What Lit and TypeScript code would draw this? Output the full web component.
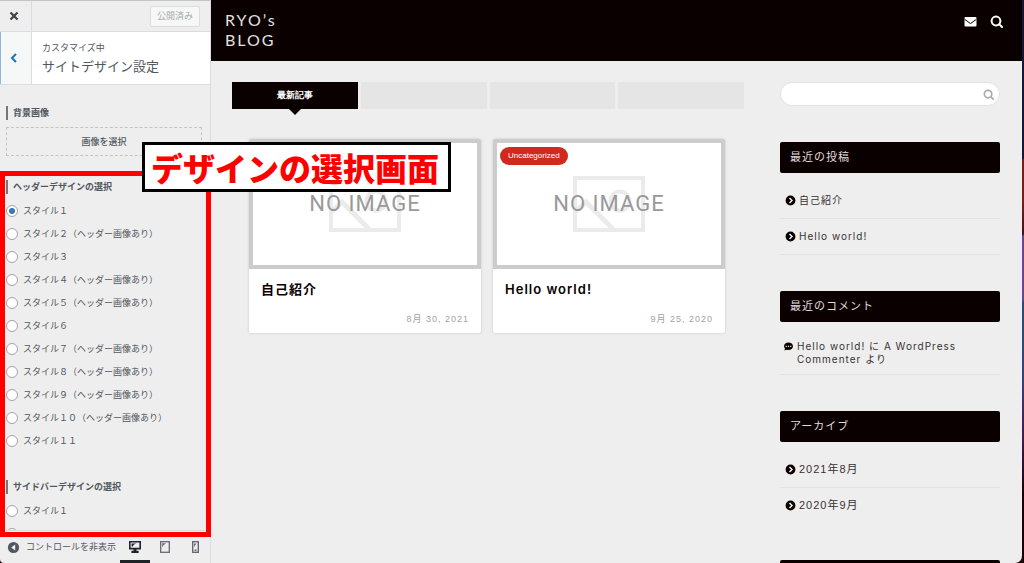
import { LitElement, html, svg, css } from "lit";
import { customElement, property } from "lit/decorators.js";

const FONT = css`"Liberation Sans", "Noto Sans CJK JP", sans-serif`;
const BLOG_FONT = css`Inter, "Noto Sans CJK JP", sans-serif`;

const IMG = "（ヘッダー画像あり）";
const headerStyles = [
  "スタイル１",
  "スタイル２" + IMG,
  "スタイル３",
  "スタイル４" + IMG,
  "スタイル５" + IMG,
  "スタイル６",
  "スタイル７" + IMG,
  "スタイル８" + IMG,
  "スタイル９" + IMG,
  "スタイル１０" + IMG,
  "スタイル１１",
];

const lens = (w: number) => svg`
  <circle cx="6" cy="6" r="4.4" fill="none" stroke="currentColor" stroke-width=${w}></circle>
  <path d="M9.4 9.4 12 12" stroke="currentColor" stroke-width=${w} stroke-linecap="round"></path>`;

/** Left column: the theme customizer controls. */
@customElement("customizer-panel")
class CustomizerPanel extends LitElement {
  static styles = css`
    :host {
      display: flex;
      flex-direction: column;
      box-sizing: border-box;
      min-height: 0;
      border-right: 1px solid #dcdcde;
      background: #eee;
      color: #50575e;
      font: 9px/14px ${FONT};
    }
    button {
      font: inherit;
      color: inherit;
      background: none;
      border: 0;
      padding: 0;
      margin: 0;
      display: flex;
      align-items: center;
      justify-content: center;
    }
    .top {
      display: flex;
      flex: none;
      box-sizing: border-box;
      height: 32px;
      border-top: 1px solid #c4c4c4;
      border-bottom: 1px solid #dcdcde;
      justify-content: space-between;
      align-items: center;
      padding-right: 10px;
    }
    .close {
      width: 32px;
      height: 30px;
      box-sizing: border-box;
      border-right: 1px solid #dcdcde;
      color: #3c434a;
      padding-right: 3px;
    }
    .saved {
      width: 50px;
      height: 21px;
      box-sizing: border-box;
      border: 1px solid #dcdcde;
      border-radius: 2px;
      background: #f6f7f7;
      color: #a7aaad;
    }
    .title {
      display: flex;
      flex: none;
      background: #fff;
      border-bottom: 1px solid #dcdcde;
    }
    .back {
      width: 32px;
      box-sizing: border-box;
      border-left: 1px solid #8fb8e0;
      border-right: 1px solid #dcdcde;
      background: #f6f7f7;
      color: #2271b1;
      padding-right: 4px;
    }
    .crumbs {
      padding: 9px 10px 5px;
    }
    .crumbs p,
    .crumbs h1 {
      margin: 0;
      font-weight: 400;
    }
    .crumbs h1 {
      font-size: 13px;
      line-height: 24px;
    }
    .controls {
      flex: 1;
      min-height: 0;
      overflow: hidden;
      padding: 21px 8px 0 6px;
    }
    .heading {
      margin: 0;
      padding: 0 0 0 5px;
      border-left: 2px solid #72777c;
      font-size: 9px;
      font-weight: 700;
      line-height: 14px;
    }
    .picker {
      width: 100%;
      height: 29px;
      margin: 7px 0 24px;
      border: 1px dashed #c3c4c7;
      font-weight: 500;
    }
    fieldset {
      border: 0;
      padding: 0;
      margin: 0 0 28px;
      min-width: 0;
    }
    .options {
      padding-top: 5px;
    }
    .option {
      display: flex;
      align-items: center;
      gap: 5px;
      height: 23px;
      white-space: nowrap;
    }
    input {
      appearance: none;
      flex: none;
      box-sizing: border-box;
      width: 12px;
      height: 12px;
      margin: 0;
      border: 1px solid #a0a3a6;
      border-radius: 50%;
      background: #fff;
    }
    input:checked {
      background: radial-gradient(circle, #3579bd 2.6px, #fff 3.4px);
    }
    .foot {
      display: flex;
      flex: none;
      box-sizing: border-box;
      height: 33px;
      border-top: 1px solid #dcdcde;
      justify-content: space-between;
      padding-left: 7px;
    }
    .collapse {
      gap: 6px;
    }
    .devices {
      display: flex;
    }
    .device {
      width: 30px;
      color: #646970;
      border-top: 3px solid transparent;
      border-bottom: 3px solid transparent;
    }
    .device.active {
      color: #1d2327;
      border-bottom-color: #1d2327;
    }
  `;

  private options(name: string, labels: string[], checked: number) {
    return html`<div class="options">
      ${labels.map(
        (l, i) => html`<label class="option">
          <input type="radio" name=${name} ?checked=${i === checked} />${l}
        </label>`
      )}
    </div>`;
  }

  render() {
    return html`
      <div class="top">
        <button class="close" aria-label="閉じる">
          <svg width="10" height="10" viewBox="0 0 10 10">
            <path d="M1.500 1.500 8.500 8.500M8.500 1.500 1.500 8.500" stroke="currentColor" stroke-width="2.200"></path>
          </svg>
        </button>
        <button class="saved" disabled>公開済み</button>
      </div>
      <div class="title">
        <button class="back" aria-label="戻る">
          <svg width="8" height="10" viewBox="0 0 8 10">
            <path d="M6 1 2 5 6 9" fill="none" stroke="currentColor" stroke-width="2"></path>
          </svg>
        </button>
        <div class="crumbs">
          <p>カスタマイズ中</p>
          <h1>サイトデザイン設定</h1>
        </div>
      </div>
      <div class="controls">
        <h2 class="heading">背景画像</h2>
        <button class="picker">画像を選択</button>
        <fieldset>
          <legend hidden>ヘッダーデザイン</legend>
          <h2 class="heading">ヘッダーデザインの選択</h2>
          ${this.options("header", headerStyles, 0)}
        </fieldset>
        <fieldset>
          <legend hidden>サイドバーデザイン</legend>
          <h2 class="heading">サイドバーデザインの選択</h2>
          ${this.options("sidebar", ["スタイル１"], -1)}
          <div class="option"><input type="radio" name="sidebar" aria-label="スタイル２" /></div>
        </fieldset>
      </div>
      <div class="foot">
        <button class="collapse">
          <svg width="13" height="13" viewBox="0 0 13 13">
            <circle cx="6.5" cy="6.5" r="5.6" fill="#50575e"></circle>
            <path d="M8.2 3.6v5.8L4.2 6.5z" fill="#eee"></path>
          </svg>
          <span>コントロールを非表示</span>
        </button>
        <div class="devices">
          <button class="device active" aria-label="デスクトップ">
            <svg width="12" height="12" viewBox="0 0 12 12">
              <path fill="currentColor" fill-rule="evenodd" d="M0 0h12v8.400H7.400v1.400h2.200V12H2.400V9.800h2.200V8.400H0zM1.600 1.600v5.200h8.800V1.600z"></path>
              <path fill="currentColor" d="M2.600 2.400h5L5 3.600 3.600 5.600h-1z"></path>
            </svg>
          </button>
          <button class="device" aria-label="タブレット">
            <svg width="10" height="12" viewBox="0 0 10 12">
              <rect x=".7" y=".7" width="8.600" height="10.600" fill="none" stroke="currentColor" stroke-width="1.300"></rect>
              <path fill="currentColor" d="M2.200 2.200h4L3.600 4 2.200 6.400z"></path>
            </svg>
          </button>
          <button class="device" aria-label="モバイル">
            <svg width="7" height="12" viewBox="0 0 7 12">
              <rect x=".7" y=".7" width="5.600" height="10.600" fill="none" stroke="currentColor" stroke-width="1.400"></rect>
              <path fill="currentColor" d="M2 2.400h2.600L2.800 4.600 2 6.600zM2.500 8.600h2v1.400h-2z"></path>
            </svg>
          </button>
        </div>
      </div>
    `;
  }
}

/** One article tile in the post list. */
@customElement("post-card")
class PostCard extends LitElement {
  @property() heading = "";
  @property() date = "";
  @property() category = "";

  static styles = css`
    :host {
      display: block;
      background: #fff;
      border-radius: 2px;
      box-shadow: 0 0 3px rgba(0, 0, 0, 0.16);
      overflow: hidden;
      position: relative;
    }
    .thumb {
      display: grid;
      place-items: center;
      box-sizing: border-box;
      height: 130px;
      border: 4px solid #ccc;
    }
    .thumb > * {
      grid-area: 1 / 1;
    }
    .none {
      font: 400 22px/24px Roboto, sans-serif;
      color: #999;
    }
    .badge {
      position: absolute;
      top: 8px;
      left: 7px;
      padding: 0 8px;
      border-radius: 9px;
      background: #cf2a1d;
      color: #fff;
      font-size: 8px;
      line-height: 18px;
      letter-spacing: 0;
      text-decoration: none;
    }
    .body {
      padding: 10px 12px 8px;
    }
    h2 {
      margin: 0;
      font-family: ${BLOG_FONT};
      font-size: 13px;
      font-weight: 600;
      line-height: 20px;
      color: #0b0000;
    }
    time {
      display: block;
      margin-top: 14px;
      text-align: right;
      font-size: 9px;
      line-height: 12px;
      color: #a2a2a2;
    }
  `;

  render() {
    return html`
      <div class="thumb">
        <svg width="72" height="56" viewBox="0 0 72 56" fill="none" stroke="#ebebeb" stroke-width="4">
          <rect x="2" y="2" width="68" height="52"></rect>
          <circle cx="47" cy="25" r="9.500"></circle>
          <path d="M2 36 13 26 40 53" stroke-width="5"></path>
        </svg>
        <span class="none">NO IMAGE</span>
      </div>
      ${this.category ? html`<a class="badge" href="#">${this.category}</a>` : null}
      <div class="body">
        <h2>${this.heading}</h2>
        <time>${this.date}</time>
      </div>
    `;
  }
}

/** Right side: live preview of the blog. */
@customElement("blog-preview")
class BlogPreview extends LitElement {
  static styles = css`
    :host {
      display: block;
      min-width: 0;
      overflow: hidden;
      background: #eee;
      color: #3a3232;
      font: 10px/13px ${FONT};
      letter-spacing: 1px;
    }
    header {
      display: flex;
      justify-content: space-between;
      align-items: flex-start;
      padding: 10px 19px 11px 14px;
      background: #0b0000;
      color: #fff;
    }
    .logo {
      font: 400 16px/20px Lato, sans-serif;
      letter-spacing: 2px;
      color: #e4e0e0;
      text-decoration: none;
    }
    .tools {
      display: flex;
      gap: 13px;
      padding-top: 5px;
    }
    button {
      border: 0;
      padding: 0;
      background: none;
      color: inherit;
      display: flex;
    }
    .page {
      display: grid;
      grid-template-columns: minmax(0, 1fr) 220px;
      gap: 36px;
      padding: 21px 22px 0 21px;
    }
    .tabs {
      display: grid;
      grid-template-columns: repeat(4, 1fr);
      gap: 3px;
    }
    .tab {
      display: block;
      position: relative;
      height: 27px;
      background: #e5e5e5;
      font-size: 9px;
      font-weight: 700;
      line-height: 27px;
      letter-spacing: 0;
      text-align: center;
      color: #fff;
    }
    .tab.on {
      background: #0b0000;
    }
    .tab.on::after {
      content: "";
      position: absolute;
      top: 100%;
      left: calc(50% - 6px);
      border: 6px solid transparent;
      border-top-color: #0b0000;
      border-bottom: 0;
    }
    .cards {
      display: grid;
      grid-template-columns: 1fr 1fr;
      gap: 12px;
      padding: 30px 19px 0 17px;
    }
    .search {
      display: flex;
      align-items: center;
      box-sizing: border-box;
      height: 24px;
      padding: 0 5px 0 12px;
      border: 1px solid #e2e2e2;
      border-radius: 12px;
      background: #fff;
      color: #aaa;
    }
    .search input {
      flex: 1;
      min-width: 0;
      border: 0;
      padding: 0;
      background: none;
      outline: 0;
      font: inherit;
    }
    section {
      margin-top: 36px;
    }
    h3 {
      margin: 0;
      min-height: 31px;
      padding: 0 10px;
      border-radius: 2px;
      background: #0b0000;
      color: #e0dcdc;
      font-size: 11px;
      font-weight: 400;
      line-height: 31px;
    }
    ul {
      list-style: none;
      margin: 0;
      padding: 10px 0 0;
      font-family: ${BLOG_FONT};
    }
    li {
      display: flex;
      gap: 3px;
      padding: 11px 5px;
      border-bottom: 1px solid #e2e2e2;
    }
    li svg {
      flex: none;
      margin-top: 1px;
    }
    li.comment {
      gap: 4px;
      padding: 8px 4px;
    }
    .archive ul {
      font-family: ${FONT};
      font-size: 11px;
    }
    .archive li:last-child {
      border-color: transparent;
    }
    li a {
      color: inherit;
      text-decoration: none;
    }
  `;

  private link(text: string) {
    return html`<li>
      <svg width="11" height="11" viewBox="0 0 11 11">
        <circle cx="5.500" cy="5.500" r="4.900" fill="#0b0000"></circle>
        <path d="M4.500 3 7 5.500 4.500 8" fill="none" stroke="#eee" stroke-width="1.500"></path>
      </svg>
      <a href="#">${text}</a>
    </li>`;
  }

  render() {
    return html`
      <header>
        <a class="logo" href="#">RYO’s<br />BLOG</a>
        <div class="tools">
          <button aria-label="メール">
            <svg width="13" height="13" viewBox="0 0 13 13">
              <rect x=".5" y="2" width="12" height="9.500" rx="1" fill="#fff"></rect>
              <path d="M.5 4.200 6.500 8.600 12.500 4.200" fill="none" stroke="#0b0000" stroke-width="1"></path>
            </svg>
          </button>
          <button aria-label="検索">
            <svg width="13" height="13" viewBox="0 0 13 13">${lens(2)}</svg>
          </button>
        </div>
      </header>
      <div class="page">
        <main>
          <div class="tabs">
            <button class="tab on">最新記事</button>
            <button class="tab" aria-label="タブ 2"></button>
            <button class="tab" aria-label="タブ 3"></button>
            <button class="tab" aria-label="タブ 4"></button>
          </div>
          <div class="cards">
            <post-card heading="自己紹介" date="8月 30, 2021"></post-card>
            <post-card heading="Hello world!" date="9月 25, 2020" category="Uncategorized"></post-card>
          </div>
        </main>
        <aside>
          <form class="search">
            <input type="text" aria-label="検索" />
            <button type="button" aria-label="検索">
              <svg width="11" height="11" viewBox="0 0 13 13">${lens(2)}</svg>
            </button>
          </form>
          <section>
            <h3>最近の投稿</h3>
            <ul>
              ${this.link("自己紹介")} ${this.link("Hello world!")}
            </ul>
          </section>
          <section>
            <h3>最近のコメント</h3>
            <ul>
              <li class="comment">
                <svg width="9" height="11" viewBox="0 0 9 11">
                  <path d="M4.500 1.600C7 1.600 9 3.200 9 5.300S7 9 4.500 9C3.900 9 3.300 8.900 2.800 8.700L.4 9.600 1 7.600C.4 7 0 6.200 0 5.300 0 3.200 2 1.600 4.500 1.600z" fill="#0b0000"></path>
                  <path d="M1.700 4.800h1.200v1.200H1.700zM3.900 4.800h1.200v1.200H3.900zM6.100 4.800h1.200v1.200H6.100z" fill="#eee"></path>
                </svg>
                <a href="#">Hello world! に A WordPress Commenter より</a>
              </li>
            </ul>
          </section>
          <section class="archive">
            <h3>アーカイブ</h3>
            <ul>
              ${this.link("2021年8月")} ${this.link("2020年9月")}
            </ul>
          </section>
          <section><h3 aria-hidden="true"></h3></section>
        </aside>
      </div>
    `;
  }
}

@customElement("app-root")
class AppRoot extends LitElement {
  static styles = css`
    :host {
      display: block;
      box-sizing: border-box;
      height: 100vh;
      padding-right: 2px;
      background: linear-gradient(
        #17163a 0 28%,
        #7d1c20 28.5% 36%,
        #4a0c1c 41.5%,
        #6d41a0 42% 53%,
        #2b4a80 54% 62%,
        #3c3a80 68%,
        #4a1450 78%,
        #1c0008 88%
      );
    }
    .window {
      position: relative;
      display: grid;
      grid-template-columns: 211px minmax(0, 1fr);
      grid-template-rows: minmax(0, 1fr);
      height: 100%;
      overflow: hidden;
      border-radius: 0 0 7px 4px;
    }
    .frame {
      position: absolute;
      top: 171px;
      left: 0;
      bottom: 26px;
      width: 211px;
      box-sizing: border-box;
      border: 5px solid #f00;
      pointer-events: none;
    }
    .callout {
      position: absolute;
      top: 142px;
      left: 142px;
      margin: 0;
      padding: 0 9px 0 6px;
      border: 3px solid #000;
      background: #fff;
      color: #f00;
      font: 900 32px/44px "Noto Sans CJK JP", sans-serif;
      white-space: nowrap;
    }
  `;

  render() {
    return html`
      <div class="window">
        <customizer-panel></customizer-panel>
        <blog-preview></blog-preview>
        <div class="frame"></div>
        <p class="callout">デザインの選択画面</p>
      </div>
    `;
  }
}
